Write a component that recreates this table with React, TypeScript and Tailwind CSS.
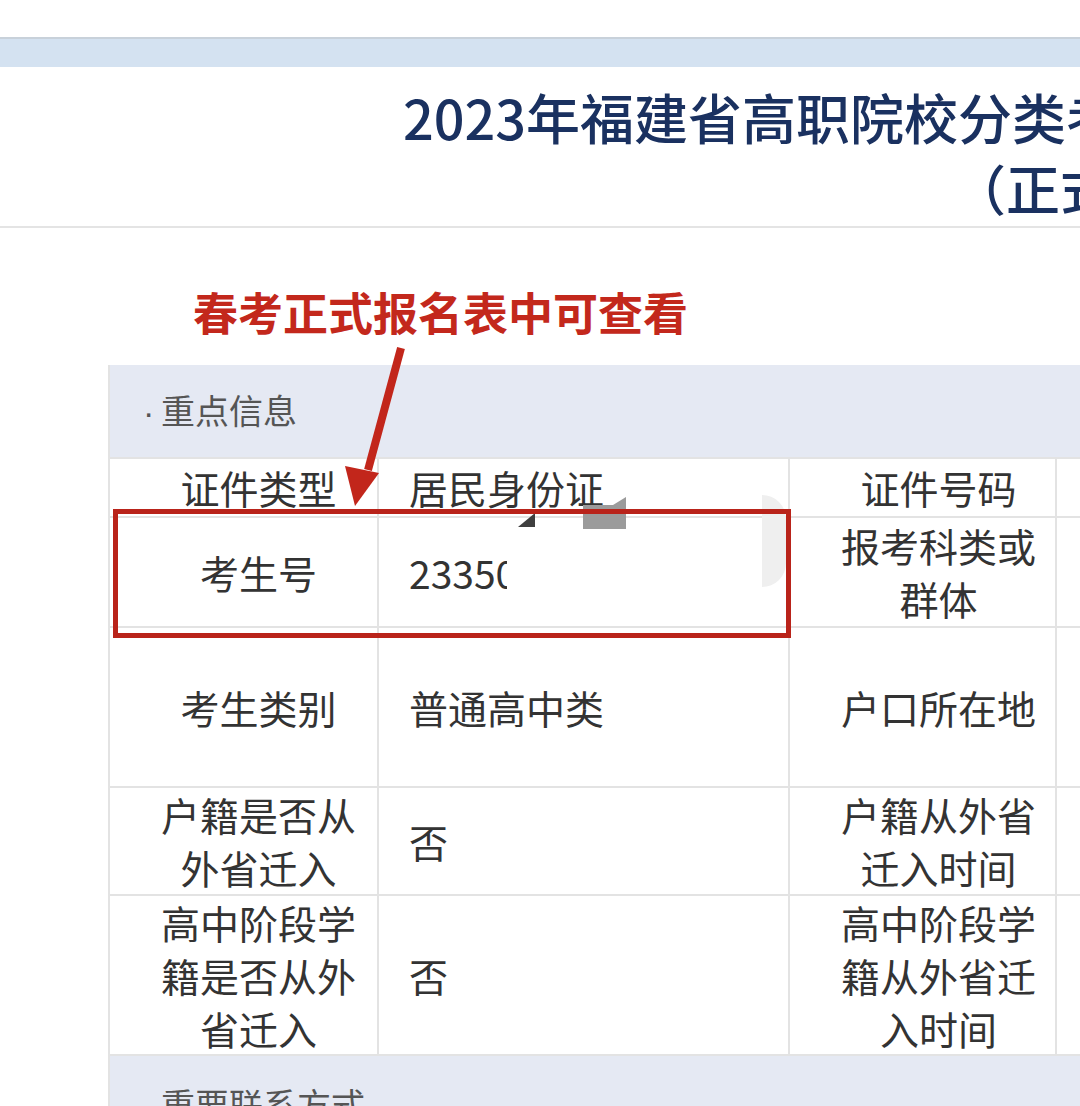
import React from 'react';

const FONT = "font-['Noto_Sans_CJK_SC','Noto_Sans',sans-serif]";

type Row = {
  h: string;
  label: string[];
  value: React.ReactNode;
  label2: string[];
};

const ROWS: Row[] = [
  { h: 'h-[59px]', label: ['证件类型'], value: '居民身份证', label2: ['证件号码'] },
  {
    h: 'h-[110px]',
    label: ['考生号'],
    value: <span className="inline-block w-[98px] overflow-hidden whitespace-nowrap align-middle">23350</span>,
    label2: ['报考科类或', '群体'],
  },
  { h: 'h-[160px]', label: ['考生类别'], value: '普通高中类', label2: ['户口所在地'] },
  { h: 'h-[108px]', label: ['户籍是否从', '外省迁入'], value: '否', label2: ['户籍从外省', '迁入时间'] },
  {
    h: 'h-[160px]',
    label: ['高中阶段学', '籍是否从外', '省迁入'],
    value: '否',
    label2: ['高中阶段学', '籍从外省迁', '入时间'],
  },
];

function Lines({ lines }: { lines: string[] }) {
  return (
    <div className="text-center leading-[53px]">
      {lines.map((l) => (
        <div key={l}>{l}</div>
      ))}
    </div>
  );
}

function SectionTitle({ text, className }: { text: string; className: string }) {
  return (
    <div className={`bg-[#e5e9f3] pl-[33px] text-[34px] leading-[40px] text-[#555] whitespace-nowrap ${className}`}>
      <span className="inline-block w-[18px] font-['Liberation_Sans',sans-serif]">·</span>
      {text}
    </div>
  );
}

export default function App() {
  return (
    <div className={`relative w-[1080px] h-[1106px] overflow-hidden bg-white ${FONT}`}>
      {/* browser chrome strip */}
      <div className="h-[37px] bg-white" />
      <div className="h-[30px] bg-[#d4e2f1] border-t-2 border-[#c8d1da]" />

      {/* title card */}
      <div className="h-[161px] bg-white rounded-tl-[10px] border-b-2 border-[#e4e4e4] text-[#1a3160] font-medium text-[54px] leading-[71px] whitespace-nowrap pt-[14px]">
        <div className="pl-[403px]">2023年福建省高职院校分类考试招生报名表</div>
        <div className="pl-[952px]">（正式报名表）</div>
      </div>

      {/* annotation */}
      <div className="h-[137px] pt-[61px] pl-[193px] text-[45px] leading-[45px] font-bold text-[#c3281c] whitespace-nowrap">
        春考正式报名表中可查看
      </div>

      {/* table */}
      <div className="ml-[108px] border-l-2 border-[#e3e3e3]">
        <SectionTitle text="重点信息" className="h-[92px] pt-[25px]" />
        {ROWS.map((r, i) => (
          <div
            key={i}
            className={`grid grid-cols-[269px_411px_267px_1fr] border-t-2 border-[#e3e3e3] ${r.h} text-[39px] text-[#333]`}
          >
            <div className="flex items-center justify-center pl-[30px] border-r-2 border-[#e3e3e3]">
              <Lines lines={r.label} />
            </div>
            <div className="flex items-center pl-[30px] border-r-2 border-[#e3e3e3] leading-[53px]">
              {r.value}
            </div>
            <div className="flex items-center justify-center pl-[32px] border-r-2 border-[#e3e3e3]">
              <Lines lines={r.label2} />
            </div>
            <div />
          </div>
        ))}
        <SectionTitle text="重要联系方式" className="h-[60px] pt-[28px] border-t-2 border-[#e3e3e3]" />
      </div>

      {/* screenshot artifacts over the id number */}
      <div className="absolute left-[518px] top-[513px] w-0 h-0 border-l-[17px] border-l-transparent border-b-[14px] border-b-[#3f3f3f]" />
      <svg className="absolute left-[583px] top-[497px]" width="44" height="32" viewBox="0 0 44 32">
        <path d="M0 8 L30 8 L43 0 L43 32 L0 32 Z" fill="#9b9b9b" />
      </svg>
      <div className="absolute left-[762px] top-[495px] w-[24px] h-[92px] rounded-r-full bg-[#efefef]" />

      {/* red highlight box */}
      <div className="absolute left-[113px] top-[509px] w-[678px] h-[129px] border-[5px] border-[#b9231a]" />

      {/* arrow */}
      <svg className="absolute left-0 top-0" width="1080" height="1106" viewBox="0 0 1080 1106">
        <line x1="401" y1="348" x2="368" y2="470" stroke="#c2261b" strokeWidth="8" strokeLinecap="butt" />
        <polygon points="355,506 345,466 379,473" fill="#c2261b" />
      </svg>
    </div>
  );
}
